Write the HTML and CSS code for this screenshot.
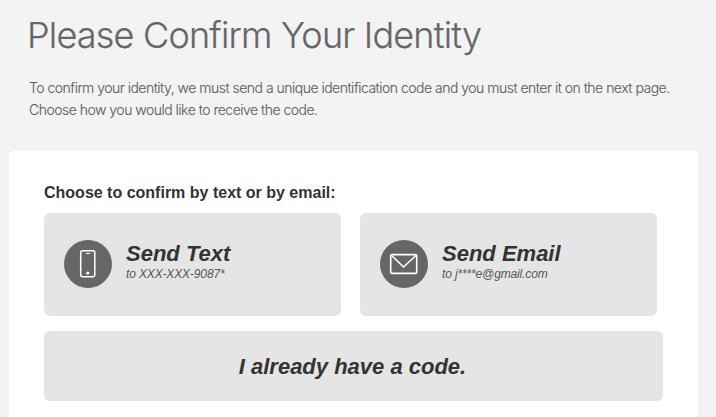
FILE: index.html
```html
<!DOCTYPE html>
<html lang="en">
<head>
<meta charset="utf-8">
<title>Please Confirm Your Identity</title>
<link rel="stylesheet" href="styles.css">
</head>
<body>
<header class="intro">
  <h1 class="title">Please Confirm Your Identity</h1>
  <p class="lead">To confirm your identity, we must send a unique identification code and you must enter it on the next page.<br>Choose how you would like to receive the code.</p>
</header>
<main class="panel">
  <h2 class="prompt">Choose to confirm by text or by email:</h2>
  <div class="options">
    <a class="option">
      <svg class="icon" viewBox="0 0 48 48" fill="none" stroke="#fff">
        <circle cx="24" cy="24" r="24" fill="#666" stroke="none"/>
        <rect x="16.7" y="10.7" width="14.1" height="26" rx="2" stroke-width="1.5"/>
        <path d="M22 13.5h4" stroke-width="1"/>
        <circle cx="23.8" cy="33" r="1.6" fill="#fff" stroke="none"/>
      </svg>
      <span class="label"><strong class="name">Send Text</strong><em class="detail">to XXX-XXX-9087*</em></span>
    </a>
    <a class="option">
      <svg class="icon" viewBox="0 0 48 48" fill="none" stroke="#fff" stroke-width="1.6">
        <circle cx="24" cy="24" r="24" fill="#666" stroke="none"/>
        <rect x="10.7" y="14.6" width="26" height="18.8" rx="1.2"/>
        <path d="M11 15l12.6 12L36.4 15"/>
      </svg>
      <span class="label"><strong class="name">Send Email</strong><em class="detail">to j****e@gmail.com</em></span>
    </a>
  </div>
  <a class="have-code">I already have a code.</a>
</main>
</body>
</html>
```
FILE: styles.css
```css
* { box-sizing: border-box; }
body {
  margin: 0;
  height: 417px;
  overflow: hidden;
  background: #f3f3f3;
  color: #333;
  font-family: "Liberation Sans", Arial, sans-serif;
}
.intro { height: 151px; padding: 12px 0 0 27px; color: #666; }
.title {
  margin: 0;
  font: 300 36px/46px Inter, "Liberation Sans", sans-serif;
  letter-spacing: -0.8px;
  -webkit-text-stroke: 0.2px #666;
  white-space: nowrap;
}
.lead {
  margin: 19px 0 0 2px;
  font: 300 14px/22px Inter, "Liberation Sans", sans-serif;
  letter-spacing: -0.51px;
  -webkit-text-stroke: 0.1px #5c5c5c;
  white-space: nowrap;
  color: #5c5c5c;
}
.panel {
  width: 689px;
  height: 280px;
  margin-left: 9px;
  padding: 31px 35px 0;
  border-radius: 4px;
  background: #fff;
}
.prompt { margin: 0; font-size: 16px; line-height: 22px; white-space: nowrap; }
.options { display: flex; gap: 19px; margin-top: 9px; }
.option {
  display: flex;
  width: 297px;
  height: 103px;
  padding: 27px 0 0 20px;
  border-radius: 6px;
  background: #e5e5e5;
}
.icon { width: 48px; height: 48px; flex: none; }
.label {
  display: flex;
  flex-direction: column;
  align-items: flex-start;
  margin-left: 14px;
  padding-top: 1px;
  white-space: nowrap;
}
.name { font-size: 22px; line-height: 26px; font-style: italic; }
.detail { font-size: 12px; line-height: 14px; color: #555; letter-spacing: -0.14px; }
.have-code {
  display: flex;
  align-items: center;
  justify-content: center;
  height: 70px;
  margin-top: 15px;
  padding: 2px 2px 0 0;
  border-radius: 6px;
  background: #e5e5e5;
  font: italic bold 22px/26px "Liberation Sans", sans-serif;
}
```
